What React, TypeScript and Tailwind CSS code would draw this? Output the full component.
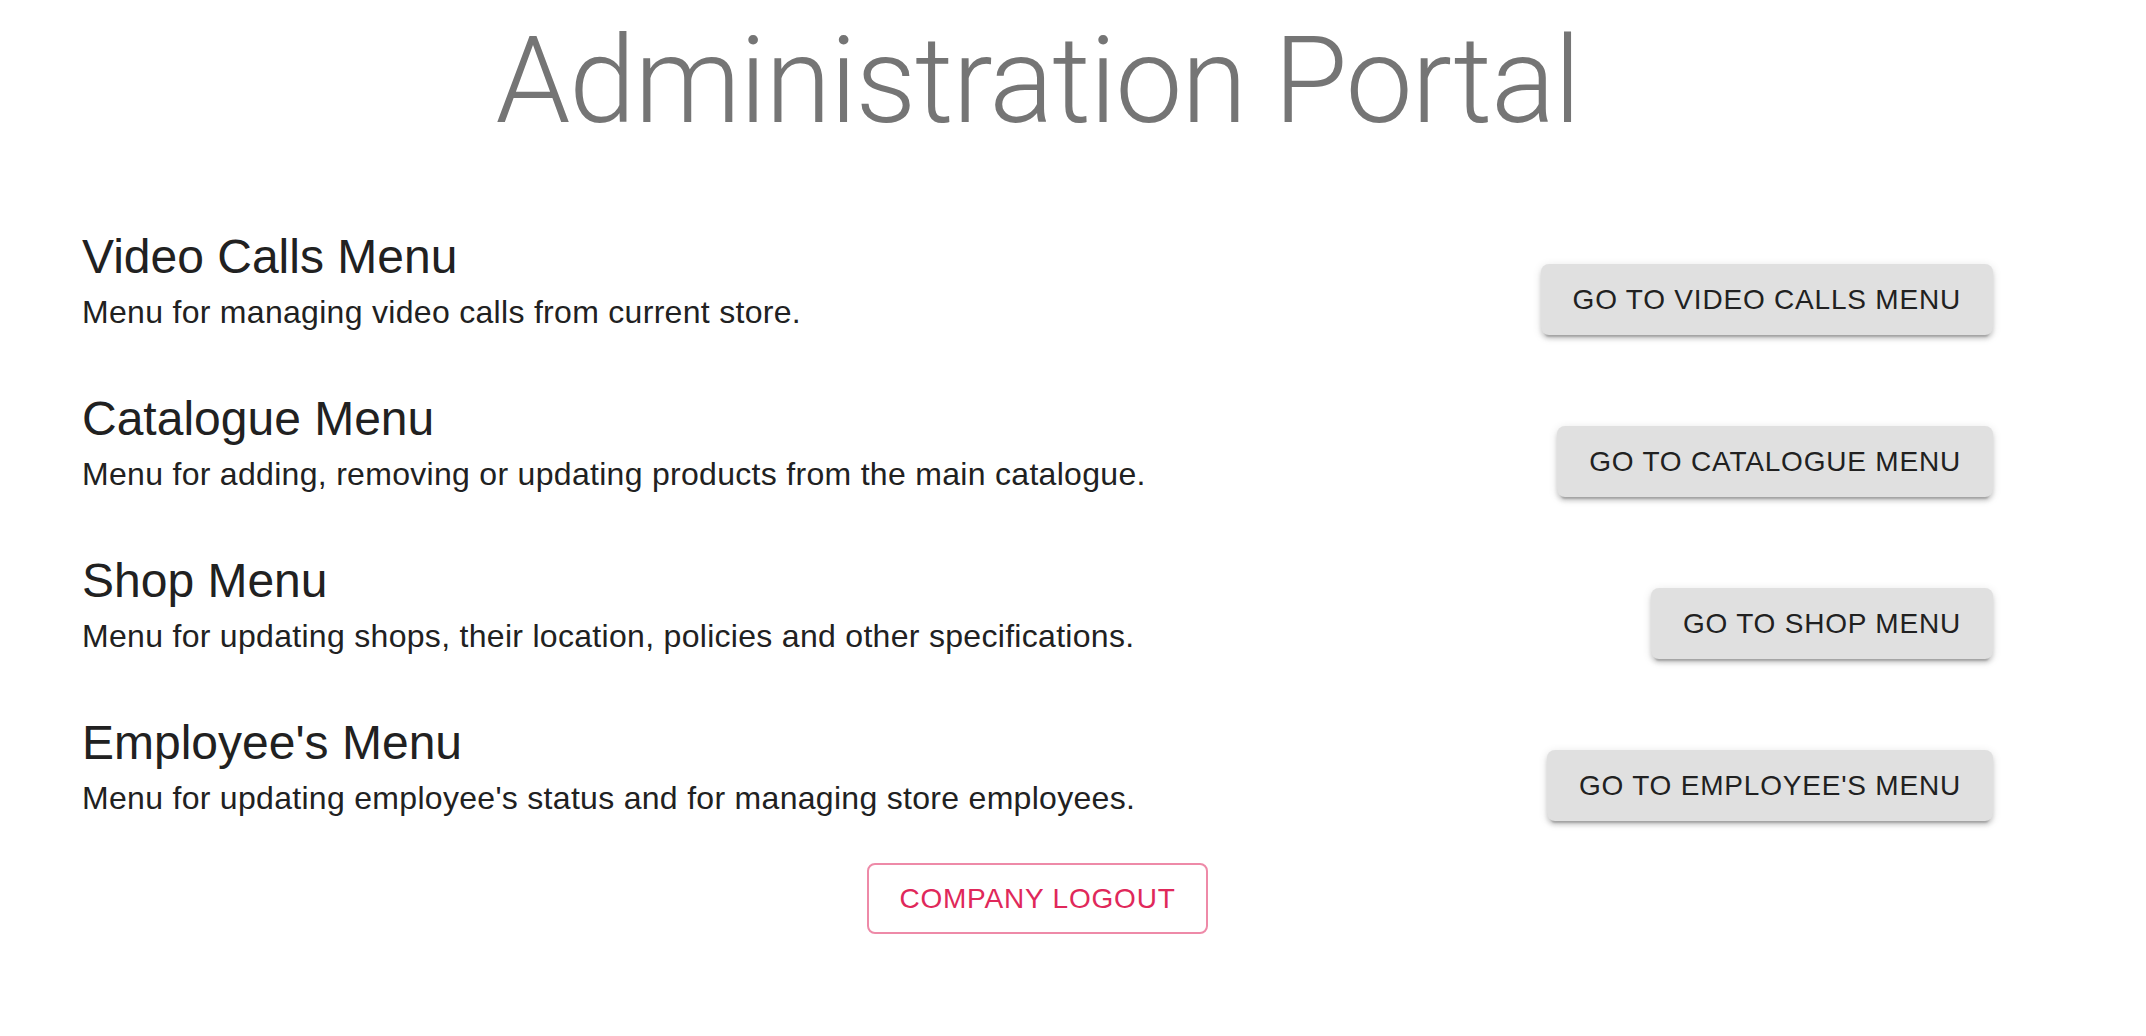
const menus = [
  {
    title: "Video Calls Menu",
    desc: "Menu for managing video calls from current store.",
    button: "Go to video calls menu",
  },
  {
    title: "Catalogue Menu",
    desc: "Menu for adding, removing or updating products from the main catalogue.",
    button: "Go to catalogue menu",
  },
  {
    title: "Shop Menu",
    desc: "Menu for updating shops, their location, policies and other specifications.",
    button: "Go to shop menu",
  },
  {
    title: "Employee's Menu",
    desc: "Menu for updating employee's status and for managing store employees.",
    button: "Go to employee's menu",
  },
];

function MenuRow({ title, desc, button }: { title: string; desc: string; button: string }) {
  return (
    <div className="flex items-end justify-between">
      <div className="flex flex-col text-[#212121]">
        <h2 className="text-[48px] leading-[62px] font-normal">{title}</h2>
        <p className="text-[32px] leading-[48px] tracking-[0.3px]">{desc}</p>
      </div>
      <button className="h-[71px] mb-[1px] px-[32px] flex items-center rounded-[8px] bg-[#e0e0e0] text-[#212121] text-[28px] uppercase tracking-[0.8px] shadow-[0_6px_2px_-4px_rgba(0,0,0,0.2),0_4px_4px_0_rgba(0,0,0,0.14),0_2px_10px_0_rgba(0,0,0,0.12)]">
        {button}
      </button>
    </div>
  );
}

export default function App() {
  return (
    <div className="min-h-screen bg-white font-['Liberation_Sans',Arial,sans-serif]">
      <div className="ml-[82px] w-[1911px] flex flex-col">
        <h1 className="mt-[9px] text-center font-['Roboto',sans-serif] font-light text-[120px] leading-[144px] tracking-[-1.3px] text-[#757575]">
          Administration Portal
        </h1>
        <div className="mt-[73px] flex flex-col gap-[52px]">
          {menus.map((m) => (
            <MenuRow key={m.title} {...m} />
          ))}
        </div>
        <div className="mt-[41px] flex justify-center">
          <button className="h-[71px] px-[30px] flex items-center rounded-[8px] border-2 border-[#ee8aa8] text-[#e0285a] text-[28px] uppercase tracking-[0.8px]">
            Company Logout
          </button>
        </div>
      </div>
    </div>
  );
}
